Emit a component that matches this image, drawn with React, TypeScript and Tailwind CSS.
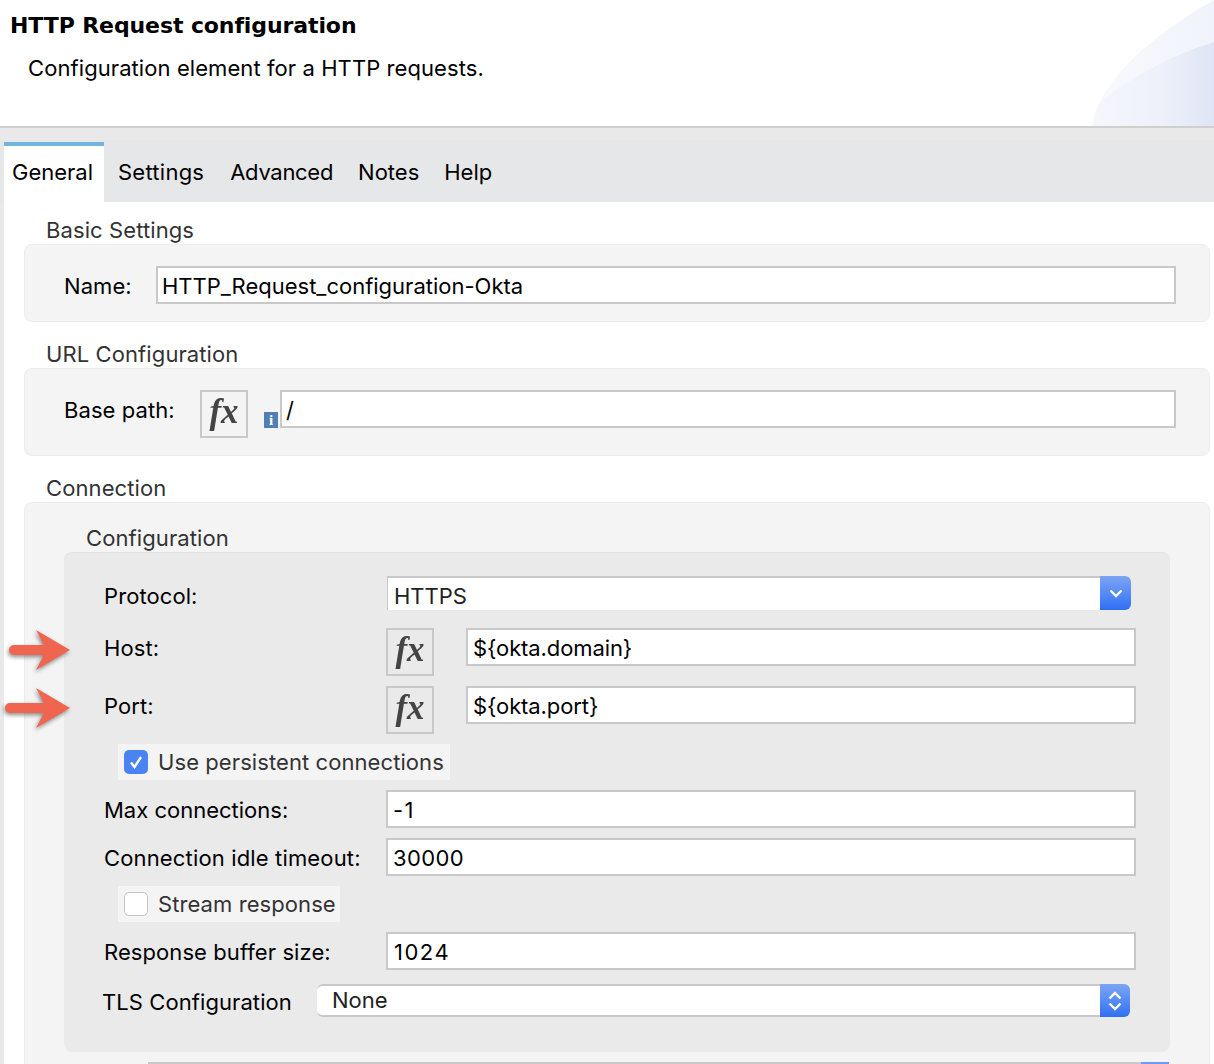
import React from "react";

const font = { fontFamily: "Inter, 'Liberation Sans', sans-serif" };

function Fx() {
  return (
    <div className="w-[48px] h-[48px] shrink-0 border-2 border-[#c8c8c8] flex items-center justify-center">
      <span className="text-[35px] leading-none font-bold italic text-[#444] blur-[0.5px] -mt-[5px] [font-family:'Liberation_Serif',serif]">fx</span>
    </div>
  );
}

function Input({ value, className }: { value: string; className: string }) {
  return (
    <div className={`h-[38px] bg-white border-2 border-[#c8c8c8] pl-[4px] pt-[2px] flex items-center text-black text-[22px] ${className}`}>
      {value}
    </div>
  );
}

function Legend({ children, className = "pl-[22px]" }: { children: React.ReactNode; className?: string }) {
  return <div className={`h-[28px] flex items-center text-[22px] tracking-[0.1px] text-[#333] ${className}`}>{children}</div>;
}

function Label({ children, className = "w-[282px]" }: { children: React.ReactNode; className?: string }) {
  return <div className={`shrink-0 h-[38px] text-[22px] tracking-[0.08px] text-black leading-[40px] ${className}`}>{children}</div>;
}

function Chevron({ up }: { up?: boolean }) {
  return (
    <svg width="14" height="9" viewBox="0 0 14 9" fill="none">
      <path d={up ? "M1.5 7.5 L7 2 L12.5 7.5" : "M1.5 1.5 L7 7 L12.5 1.5"} stroke="white" strokeWidth="2.4" />
    </svg>
  );
}

function Check({ on, label, className }: { on?: boolean; label: string; className: string }) {
  return (
    <div className={`h-[36px] bg-[#f4f4f4] flex items-center pl-[6px] ml-[53px] ${className}`}>
      {on ? (
        <div className="w-[24px] h-[24px] shrink-0 rounded-[5px] bg-[#4a84f2] flex items-center justify-center">
          <svg width="16" height="16" viewBox="0 0 16 16" fill="none">
            <path d="M3 8.5 L6.5 13 L13 3" stroke="white" strokeWidth="2.4" />
          </svg>
        </div>
      ) : (
        <div className="w-[24px] h-[24px] shrink-0 rounded-[5px] bg-white border border-[#c4c4c4]" />
      )}
      <span className="ml-[10px] text-[22px] tracking-[0.08px] text-[#333] whitespace-nowrap">{label}</span>
    </div>
  );
}

function Arrow({ className, x0, tip, cy }: { className: string; x0: number; tip: number; cy: number }) {
  return (
    <svg className={`absolute left-0 ${className}`} width="80" height="56" viewBox="0 0 80 56" style={{ filter: "drop-shadow(-1px 2px 2px rgba(0,0,0,0.45))" }}>
      <path d={`M${x0 + 5} ${cy - 5} H44 L36 ${cy - 20} L${tip} ${cy} L36 ${cy + 20} L44 ${cy + 5} H${x0 + 5} A5 5 0 0 1 ${x0 + 5} ${cy - 5} Z`} fill="#f0654f" />
    </svg>
  );
}

export default function App() {
  return (
    <div className="relative w-[1214px] h-[1064px] overflow-hidden bg-white" style={font}>
      <header className="relative h-[126px] pl-[10px] pt-[10px]">
        <svg className="absolute right-0 top-0" width="122" height="126" viewBox="0 0 122 126">
          <defs>
            <linearGradient id="a" x1="0" x2="1" y1="0" y2="0">
              <stop offset="0" stopColor="#f9fafd" />
              <stop offset="1" stopColor="#f0f3fb" />
            </linearGradient>
            <linearGradient id="b" x1="0" x2="1" y1="0" y2="0">
              <stop offset="0" stopColor="#f6f7fc" />
              <stop offset="0.6" stopColor="#edf0fa" />
              <stop offset="1" stopColor="#dfe5f5" />
            </linearGradient>
          </defs>
          <path d="M0 126 C3 90 50 40 122 0 V126 Z" fill="url(#a)" />
          <path d="M8 102 C40 76 80 55 122 42 V126 H0 C1 118 4 110 8 102 Z" fill="url(#b)" />
        </svg>
        <h1 className="relative text-[22px] leading-[32px] font-bold text-black [font-family:'DejaVu_Sans',sans-serif] tracking-[-0.1px]">HTTP Request configuration</h1>
        <p className="relative mt-[10px] ml-[18px] text-[22px] leading-[32px] tracking-[0.08px] text-black">Configuration element for a HTTP requests.</p>
      </header>
      <div className="h-[2px] bg-[#cfcfcf]" />

      <div className="h-[74px] bg-[#e6e7e9] flex items-end pl-[4px] relative">
        <div className="absolute left-0 right-0 top-0 h-[12px] bg-[#e9e9e9]" />
        <div className="relative w-[100px] h-[60px] bg-white border-t-4 border-[#74b3dc] pl-[8px] pb-[4px] flex items-center">
          <span className="text-[22px] text-black">General</span>
        </div>
        <div className="relative h-[60px] pl-[14px] flex items-center text-[22px] text-black">
          <span className="tracking-[0.25px]">Settings</span>
          <span className="ml-[26px] tracking-[-0.3px]">Advanced</span>
          <span className="ml-[25px]">Notes</span>
          <span className="ml-[25px]">Help</span>
        </div>
      </div>

      <main className="h-[862px] border-l-4 border-[#e9e9e9] pl-[20px] pr-[4px]">
        <div className="pt-[14px]">
          <Legend>Basic Settings</Legend>
          <section className="h-[78px] bg-[#f4f4f4] border border-[#ececec] rounded-[8px] flex items-start pt-[21px] pl-[39px] pr-[33px]">
            <Label className="w-[92px]">Name:</Label>
            <Input value="HTTP_Request_configuration-Okta" className="flex-1" />
          </section>
        </div>

        <div className="pt-[18px]">
          <Legend>URL Configuration</Legend>
          <section className="h-[88px] bg-[#f4f4f4] border border-[#ececec] rounded-[8px] flex items-start pt-[21px] pl-[39px] pr-[33px]">
            <Label className="w-[136px]">Base path:</Label>
            <Fx />
            <div className="ml-[16px] mt-[22px] w-[14px] h-[16px] shrink-0 bg-[#4f7fb5] flex items-center justify-center text-white text-[15px] leading-none font-bold [font-family:'Liberation_Serif',serif]">i</div>
            <Input value="/" className="ml-[2px] flex-1" />
          </section>
        </div>

        <div className="pt-[18px]">
          <Legend>Connection</Legend>
          <section className="h-[600px] bg-[#f4f4f4] border border-[#ececec] rounded-[8px] pl-[39px] pr-[39px] pt-[21px]">
            <Legend className="pl-[22px]">Configuration</Legend>
            <div className="h-[500px] bg-[#eaeaea] border-t border-[#e2e2e2] rounded-[8px] pl-[1px] pr-[34px]">
              <div className="pt-[23px] flex items-start pr-[5px]">
                <Label className="ml-[39px] w-[283px]">Protocol:</Label>
                <div className="h-[34px] flex-1 flex">
                  <div className="flex-1 bg-white border-t-2 border-l border-[#c8c8c8] pl-[6px] pt-[4px] flex items-center text-[22px] text-[#222]">HTTPS</div>
                  <div className="w-[31px] rounded-r-[6px] bg-gradient-to-b from-[#7da4f3] to-[#2f6ff5] flex items-center justify-center"><Chevron /></div>
                </div>
              </div>

              <div className="mt-[14px] flex items-start">
                <Label className="ml-[39px] w-[282px]">Host:</Label>
                <Fx />
                <Input value="${okta.domain}" className="ml-[32px] flex-1 pl-[5px] tracking-[-0.1px]" />
              </div>
              <div className="mt-[10px] flex items-start">
                <Label className="ml-[39px] w-[282px]">Port:</Label>
                <Fx />
                <Input value="${okta.port}" className="ml-[32px] flex-1 pl-[5px] tracking-[-0.1px]" />
              </div>

              <Check on label="Use persistent connections" className="w-[332px] mt-[10px]" />

              <div className="mt-[10px] flex">
                <Label className="ml-[39px] w-[282px] tracking-[0px]">Max connections:</Label>
                <Input value="-1" className="flex-1 tracking-[1.3px] pl-[5px]" />
              </div>
              <div className="mt-[10px] flex">
                <Label className="ml-[39px] w-[282px] tracking-[0.15px]">Connection idle timeout:</Label>
                <Input value="30000" className="flex-1 tracking-[0.35px] pl-[5px]" />
              </div>

              <Check label="Stream response" className="w-[222px] mt-[10px]" />

              <div className="mt-[10px] flex">
                <Label className="ml-[39px] w-[282px] tracking-[0.1px]">Response buffer size:</Label>
                <Input value="1024" className="flex-1 tracking-[1.5px] pl-[6px]" />
              </div>

              <div className="mt-[14px] flex items-start pr-[6px]">
                <Label className="ml-[37px] w-[215px] text-[#333] !leading-[36px]">TLS Configuration</Label>
                <div className="h-[33px] flex-1 flex">
                  <div className="flex-1 bg-white rounded-l-[6px] border-t-2 border-[#c8c8c8] border-b-2 pl-[15px] flex items-center text-[22px] text-[#222]">None</div>
                  <div className="w-[30px] rounded-r-[6px] bg-gradient-to-b from-[#7da4f3] to-[#2f6ff5] flex flex-col items-center justify-center gap-[2px]"><Chevron up /><Chevron /></div>
                </div>
              </div>
            </div>
            <div className="mt-[10px] ml-[84px] mr-[1px] h-[2px] flex">
              <div className="flex-1 bg-[#c8c8c8]" />
              <div className="w-[28px] bg-[#6d9bf3]" />
            </div>
          </section>
        </div>
      </main>

      <Arrow className="top-[622px]" x0={9} tip={70} cy={28} />
      <Arrow className="top-[680px]" x0={5} tip={70} cy={28} />
    </div>
  );
}
